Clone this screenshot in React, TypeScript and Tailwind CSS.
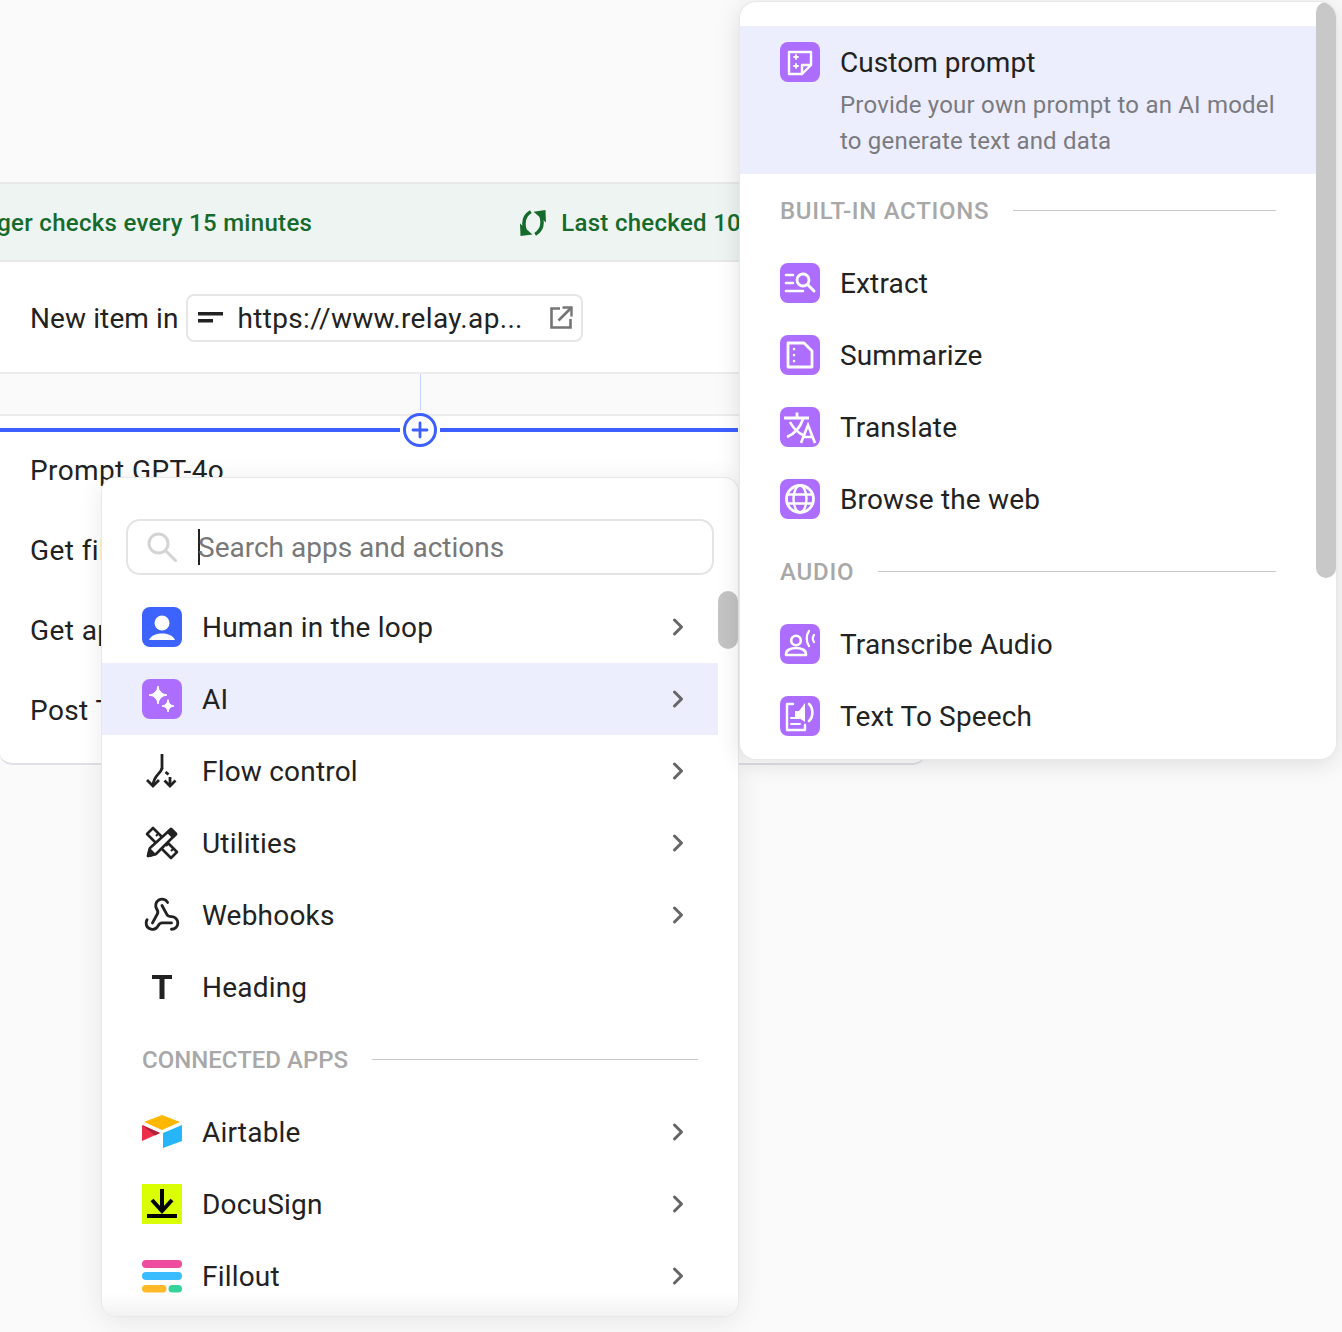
import React from "react";
import { ChevronRight, Plus, Webhook } from "lucide-react";

const FONT = "font-['Roboto','Liberation_Sans',sans-serif]";

function Tile({ bg = "bg-[#ad6eff]", children }: { bg?: string; children: React.ReactNode }) {
  return (
    <div className={`flex h-10 w-10 shrink-0 items-center justify-center rounded-[8px] ${bg}`}>
      <svg width="40" height="40" viewBox="0 0 40 40" fill="none">
        {children}
      </svg>
    </div>
  );
}

const W = { stroke: "#fff", strokeWidth: 2.4, strokeLinecap: "round" as const, strokeLinejoin: "round" as const };

const icons = {
  human: (
    <Tile bg="bg-[#3d63ff]">
      <circle cx="20" cy="16" r="7.500" fill="#fff" />
      <path d="M7 33c2-5 8-6.500 13-6.500S31 28 33 33z" fill="#fff" />
    </Tile>
  ),
  ai: (
    <Tile>
      <path d="M16 7Q17 15 25 16Q17 17 16 25Q15 17 7 16Q15 15 16 7z" fill="#fff" stroke="#fff" strokeWidth="1" strokeLinejoin="round" />
      <path d="M26 20.500Q26.700 26.300 32 27Q26.700 27.700 26 33Q25.300 27.700 20 27Q25.300 26.300 26 20.500z" fill="#fff" stroke="#fff" strokeWidth="1" strokeLinejoin="round" />
    </Tile>
  ),
  prompt: (
    <Tile>
      <path d="M9 10h22v13l-9 9H9z" {...W} />
      <path d="M22 32v-9h9" {...W} />
      <path d="M16 13v4M14 15h4M16 22v4M14 24h4" {...W} strokeWidth={1.800} />
    </Tile>
  ),
  extract: (
    <Tile>
      <path d="M6 12h7M6 20h7M6 28h17" {...W} strokeWidth={2.600} />
      <circle cx="23" cy="17" r="6" {...W} strokeWidth={2.800} />
      <path d="M28 22l6 6" {...W} strokeWidth={3} />
    </Tile>
  ),
  summarize: (
    <Tile>
      <path d="M8 8h16l8 8v16H8z" {...W} strokeWidth={2.800} />
      <path d="M14 14v.1M14 20v.1M14 26v.1" {...W} strokeWidth={2.600} />
    </Tile>
  ),
  translate: (
    <Tile>
      <path d="M4 11h25M17 5.500V11" stroke="#fff" strokeWidth="2.800" />
      <path d="M23 12c-3 9-9 15-16 18" stroke="#fff" strokeWidth="2.600" />
      <path d="M10 15c3 6 7 10 13 13" stroke="#fff" strokeWidth="2.600" />
      <path d="M21 36l7-18 7 18M23.500 30h9" stroke="#fff" strokeWidth="2.600" />
    </Tile>
  ),
  globe: (
    <Tile>
      <circle cx="20" cy="20" r="13.500" {...W} strokeWidth={2.800} />
      <ellipse cx="20" cy="20" rx="6.500" ry="13.500" {...W} strokeWidth={2.400} />
      <path d="M7 15.500h26M7 24.500h26" {...W} strokeWidth={2.400} />
    </Tile>
  ),
  transcribe: (
    <Tile>
      <circle cx="16" cy="16.500" r="4.800" {...W} strokeWidth={2.600} />
      <path d="M6 31v-1c0-4 5-6 10-6s10 2 10 6v1z" {...W} strokeWidth={2.600} />
      <path d="M29 7c-3 4-3 11 0 15M34 11c-1.500 2-1.500 5 0 7" {...W} strokeWidth={2.200} />
    </Tile>
  ),
  tts: (
    <Tile>
      <path d="M13 8H7v26h18v-5" {...W} />
      <path d="M11 22h8M11 28h9" {...W} strokeWidth={2} />
      <path d="M15 15h4l6-8v19l-6-4h-4z" fill="#fff" />
      <path d="M29 8c4.500 4 4.500 13 0 17" {...W} strokeWidth={2.600} />
    </Tile>
  ),
};

function Flow() {
  return (
    <svg width="40" height="40" viewBox="0 0 40 40" fill="none" stroke="#222" strokeWidth="2.800">
      <path d="M20 3v15" />
      <path d="M20 17c0 5-9 7-9 18" />
      <path d="M5 29l6 6 6-6" />
      <path d="M23.500 21l3 2.500" />
      <path d="M28 26v9" />
      <path d="M22.500 29.500l5.500 5.500 5.500-5.500" />
    </svg>
  );
}

function Utilities() {
  return (
    <svg width="40" height="40" viewBox="0 0 40 40" fill="none" stroke="#222" strokeWidth="2.600" strokeLinejoin="round">
      <path d="M11 5l24 24-6 6L5 11z" />
      <path d="M14 13l2-2M19 18l2-2M24 23l2-2M29 28l2-2" strokeWidth="2" />
      <path d="M29 6l5 5-20 20-8 2 2-8z" fill="#fff" />
      <path d="M29 6l5 5-3 3-5-5z" fill="#222" />
      <path d="M6 33l1.500-6.500 5 5z" fill="#222" />
    </svg>
  );
}

function TIcon() {
  return (
    <svg width="40" height="40" viewBox="0 0 40 40" fill="#222">
      <rect x="10" y="8" width="20" height="4" />
      <rect x="17.500" y="8" width="5" height="24" />
    </svg>
  );
}

function Airtable() {
  return (
    <svg width="40" height="40" viewBox="0 0 40 40">
      <path d="M20 3L2 10l18 8 18-8z" fill="#ffb700" />
      <path d="M21 21v15l19-7V13z" fill="#26b5f8" />
      <path d="M0 13v16l18-8z" fill="#ed3049" />
      <path d="M0 13l18 8-5 2.500z" fill="#b0213a" />
    </svg>
  );
}

function DocuSign() {
  return (
    <svg width="40" height="40" viewBox="0 0 40 40">
      <rect width="40" height="40" fill="#d9ff00" />
      <path d="M20 5v22" stroke="#000" strokeWidth="4" />
      <path d="M10 16l10 11 10-11" stroke="#000" strokeWidth="4" fill="none" />
      <rect x="5" y="30" width="30" height="4" fill="#000" />
    </svg>
  );
}

function Fillout() {
  return (
    <svg width="40" height="40" viewBox="0 0 40 40">
      <rect y="4" width="40" height="8" rx="4" fill="#ef4a9b" />
      <rect y="16" width="40" height="8" rx="4" fill="#3bbcff" />
      <rect y="29" width="24.500" height="7.500" rx="3.750" fill="#ffb928" />
      <rect x="26.500" y="29" width="13.500" height="7.500" rx="3.750" fill="#34d399" />
    </svg>
  );
}

function SectionHead({ label, className, tracking }: { label: string; className: string; tracking: string }) {
  return (
    <div className={`flex items-center gap-6 ${className}`}>
      <span className={`text-[24px] font-medium leading-none text-[#a8a8a8] ${tracking}`}>{label}</span>
      <div className="h-px flex-1 bg-[#c8c8c8]" />
    </div>
  );
}

function LeftRow({ icon, label, active, chevron = true }: { icon: React.ReactNode; label: string; active?: boolean; chevron?: boolean }) {
  return (
    <div className={`flex h-[72px] items-center gap-5 pl-10 pr-[26px] ${active ? "bg-[#eceefd]" : ""}`}>
      <div className="flex h-10 w-10 shrink-0 items-center justify-center">{icon}</div>
      <span className="flex-1 pt-[2px] text-[28px] tracking-[0.2px] text-[#222]">{label}</span>
      {chevron && <ChevronRight size={28} strokeWidth={2.600} className="text-[#666]" />}
    </div>
  );
}

function RightRow({ icon, label }: { icon: React.ReactNode; label: string }) {
  return (
    <div className="flex h-[72px] items-center gap-5 pl-10">
      {icon}
      <span className="pt-[2px] text-[28px] tracking-[0.15px] text-[#222]">{label}</span>
    </div>
  );
}

export default function App() {
  return (
    <div className={`relative h-[1332px] w-[1342px] overflow-hidden bg-[#fafafa] ${FONT}`}>
      {/* canvas behind the menus */}
      <div className="flex w-[925px] flex-col pt-[182px]">
        <div className="flex h-[80px] items-center overflow-hidden whitespace-nowrap border-y-2 border-[#e8e8e8] bg-[#eef4f2] pt-[2px] text-[24px] font-medium tracking-[0.3px] text-[#166b2c]">
          <span className="ml-[-46px]">Trigger checks every 15 minutes</span>
          <span className="ml-[208px] flex items-center gap-[15px]">
            <svg width="26" height="26" viewBox="0 0 24 24" fill="none" stroke="#166b2c" strokeWidth="3.200">
              <path d="M10 1.500C4 5 2 11 5 20" />
              <path d="M0 12.500L0.500 24 11.500 22.500z" fill="#166b2c" stroke="none" />
              <path d="M14 22.500c6-3.500 8-9.500 5-18.500" />
              <path d="M24 11.500L23.500 0 12.500 1.500z" fill="#166b2c" stroke="none" />
            </svg>
            Last checked 10 minutes ago
          </span>
        </div>
        <div className="flex h-[112px] items-center gap-[7px] border-b-2 border-[#ececec] bg-white pl-[30px] pt-[2px]">
          <span className="pt-[2px] text-[28px] tracking-[0.1px] text-[#222]">New item in</span>
          <div className="flex h-12 w-[397px] items-center rounded-[8px] border-2 border-[#e6e6e6] pl-[10px] pr-[8px]">
            <svg width="26" height="16" viewBox="0 0 26 16">
              <rect x="0" y="2" width="25" height="3.500" fill="#222" />
              <rect x="0" y="9" width="15" height="3.500" fill="#222" />
            </svg>
            <span className="ml-[14px] flex-1 whitespace-nowrap pt-[2px] text-[28px] tracking-[0.33px] text-[#222]">https://www.relay.ap...</span>
            <svg width="24" height="24" viewBox="0 0 24 24" fill="none" stroke="#757575" strokeWidth="2.600">
              <path d="M11 2.500H2.500v19h19V13" />
              <path d="M9.500 14.500l12-12" />
              <path d="M13.500 1.500h9v9" strokeWidth="2.400" />
            </svg>
          </div>
        </div>
        <div className="flex h-[40px] justify-center pr-[85px]">
          <div className="h-[36px] w-px bg-[#c6d2fb]" />
        </div>
        <div className="relative flex h-[351px] flex-col rounded-b-[12px] border-y-2 border-t-[#ececec] border-b-[#e0e0e8] bg-white pl-[30px] pt-[15px] text-[28px] tracking-[0.4px] text-[#222]">
          <div className="flex h-20 items-center">Prompt GPT-4o</div>
          <div className="flex h-20 items-center">Get file</div>
          <div className="flex h-20 items-center">Get app</div>
          <div className="flex h-20 items-center">Post Tweet</div>
        </div>
      </div>

      {/* drop indicator */}
      <div className="absolute left-0 top-[428px] h-1 w-[400px] bg-[#3d5fff]" />
      <div className="absolute left-[440px] top-[428px] h-1 w-[298px] bg-[#3d5fff]" />
      <div className="absolute left-[403px] top-[413px] flex h-[34px] w-[34px] items-center justify-center rounded-full border-[3px] border-[#3d5fff] bg-white">
        <Plus size={24} strokeWidth={2.800} className="text-[#3d5fff]" />
      </div>

      {/* left menu */}
      <div className="absolute left-[102px] top-[478px] h-[838px] w-[636px] overflow-hidden rounded-[14px] bg-white shadow-[0_0_0_1px_#e8e8e8,0_4px_28px_rgba(0,0,0,0.09)]">
        <div className="mx-6 mt-[41px] flex h-[56px] items-center rounded-[14px] border-2 border-[#e4e4e4] pl-[18px]">
          <svg width="32" height="32" viewBox="0 0 32 32" fill="none" stroke="#d4d4d4" strokeWidth="3">
            <circle cx="12.500" cy="12.500" r="9.500" />
            <path d="M20 20l9.500 9.500" strokeLinecap="round" />
          </svg>
          <span className="ml-[20px] mr-[-2px] h-[36px] w-[2px] bg-[#222]" />
          <span className="pt-[2px] text-[28px] text-[#787878]">Search apps and actions</span>
        </div>
        <div className="mt-[16px] w-[616px]">
          <LeftRow label="Human in the loop" icon={icons.human} />
          <LeftRow label="AI" icon={icons.ai} active />
          <LeftRow label="Flow control" icon={<Flow />} />
          <LeftRow label="Utilities" icon={<Utilities />} />
          <LeftRow label="Webhooks" icon={<Webhook size={38} strokeWidth={1.800} className="text-[#222]" />} />
          <LeftRow label="Heading" chevron={false} icon={<TIcon />} />
          <SectionHead label="CONNECTED APPS" tracking="tracking-[0px]" className="h-[73px] pl-10 pr-[20px]" />
          <LeftRow label="Airtable" icon={<Airtable />} />
          <LeftRow label="DocuSign" icon={<DocuSign />} />
          <LeftRow label="Fillout" icon={<Fillout />} />
        </div>
        <div className="absolute right-0 top-[113px] h-[58px] w-5 rounded-[10px] bg-[#c4c4c4]" />
        <div className="absolute inset-x-0 bottom-0 h-6 bg-gradient-to-b from-transparent to-[#f2f2f2]" />
      </div>

      {/* right menu */}
      <div className="absolute left-[740px] top-[2px] h-[757px] w-[596px] overflow-hidden rounded-[16px] bg-white shadow-[0_0_0_1px_#e8e8e8,0_4px_24px_rgba(0,0,0,0.13)]">
        <div className="w-[576px] pt-6">
          <div className="flex h-[148px] gap-5 bg-[#eceefd] pl-10 pt-4">
            {icons.prompt}
            <div className="flex flex-col">
              <span className="text-[28px] leading-[42px] tracking-[0.05px] text-[#222]">Custom prompt</span>
              <span className="mt-[3px] w-[440px] text-[24px] leading-[36px] tracking-[0.2px] text-[#7a7a80]">
                Provide your own prompt to an AI model to generate text and data
              </span>
            </div>
          </div>
          <SectionHead label="BUILT-IN ACTIONS" tracking="tracking-[0.7px]" className="h-[73px] pl-10 pr-10" />
          <RightRow label="Extract" icon={icons.extract} />
          <RightRow label="Summarize" icon={icons.summarize} />
          <RightRow label="Translate" icon={icons.translate} />
          <RightRow label="Browse the web" icon={icons.globe} />
          <SectionHead label="AUDIO" tracking="tracking-[0.8px]" className="h-[73px] pl-10 pr-10" />
          <RightRow label="Transcribe Audio" icon={icons.transcribe} />
          <RightRow label="Text To Speech" icon={icons.tts} />
        </div>
        <div className="absolute right-0 top-0 h-[576px] w-5 rounded-[10px] bg-[#c8c8c8]" />
      </div>
    </div>
  );
}
